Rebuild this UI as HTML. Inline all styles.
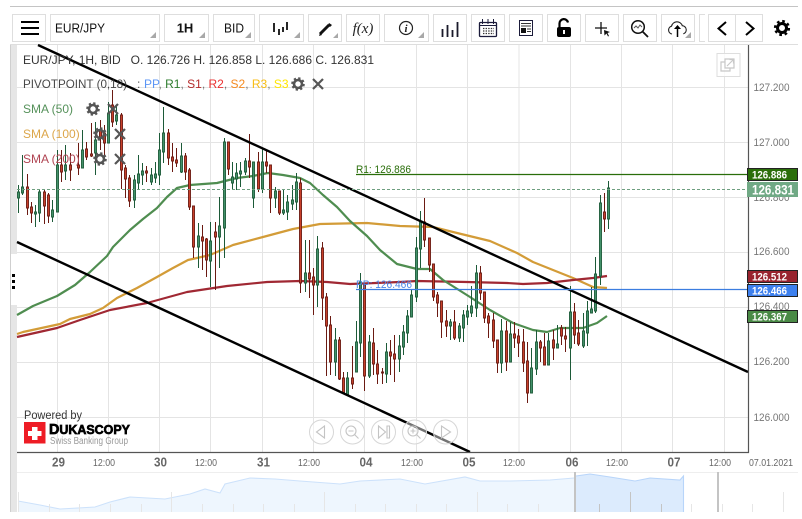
<!DOCTYPE html>
<html><head><meta charset="utf-8"><title>EUR/JPY</title>
<style>
html,body{margin:0;padding:0;background:#fff;width:802px;height:519px;overflow:hidden}
svg{display:block}
text{font-family:"Liberation Sans",sans-serif}
</style></head><body>
<svg width="802" height="519" viewBox="0 0 802 519" xmlns="http://www.w3.org/2000/svg">
<defs>
<g id="gear"><circle r="4" fill="none" stroke="currentColor" stroke-width="2.6"/><circle r="5.6" fill="none" stroke="currentColor" stroke-width="2.4" stroke-dasharray="2.2 2.2"/></g>
</defs>
<!-- toolbar -->
<rect x="10" y="6" width="788" height="1" fill="#c4c4c4"/>
<rect x="10" y="44" width="788" height="1" fill="#dedede"/>
<g fill="#fff" stroke="#dedede">
<rect x="12.5" y="14.5" width="33" height="27"/><rect x="50.5" y="14.5" width="109" height="27"/><rect x="164.5" y="14.5" width="44" height="27"/><rect x="213.5" y="14.5" width="41" height="27"/><rect x="259.5" y="14.5" width="44" height="27"/><rect x="308.5" y="14.5" width="33" height="27"/><rect x="346.5" y="14.5" width="33" height="27"/><rect x="384.5" y="14.5" width="44" height="27"/><rect x="433.5" y="14.5" width="33" height="27"/><rect x="471.5" y="14.5" width="33" height="27"/><rect x="509.5" y="14.5" width="33" height="27"/><rect x="547.5" y="14.5" width="33" height="27"/><rect x="585.5" y="14.5" width="33" height="27"/><rect x="623.5" y="14.5" width="33" height="27"/><rect x="661.5" y="14.5" width="33" height="27"/><rect x="708.5" y="14.5" width="54" height="27"/><path d="M735.5 14.5V41.5M705 14.5H699.5V41.5H705"/>
</g>
<path fill="#a8a8a8" d="M156 32v6h-6zM205 32v6h-6zM251 32v6h-6zM300 32v6h-6zM338 33v5h-5zM424 32v6h-6zM691 32v6h-6z"/>
<path stroke="#000" stroke-width="2" d="M21 22H39M21 28H39M21 34H39"/>
<text x="55" y="32.500" font-size="13" fill="#111" textLength="50" lengthAdjust="spacingAndGlyphs">EUR/JPY</text>
<text x="185" y="32.500" font-size="13" font-weight="bold" text-anchor="middle" fill="#111">1H</text>
<text x="234" y="32.500" font-size="13" text-anchor="middle" fill="#111" textLength="20" lengthAdjust="spacingAndGlyphs">BID</text>
<path stroke="#111" stroke-width="1.8" fill="none" d="M274 23V32M279 29V35M283 27V32M287 22V30"/>
<path stroke="#111" stroke-width="3" d="M320 34L329 25"/><path fill="#111" d="M319 36l1-3 2 2zM329 23l3 2-2 2-2-2z"/>
<text x="363" y="33" font-size="15" text-anchor="middle" font-style="italic" style="font-family:'Liberation Serif',serif" fill="#222">f(x)</text>
<circle cx="406" cy="28" r="6.5" fill="none" stroke="#222" stroke-width="1.2"/><text x="406" y="32" font-size="11" font-weight="bold" font-style="italic" text-anchor="middle" style="font-family:'Liberation Serif',serif" fill="#222">i</text>
<path stroke="#1a1a2a" stroke-width="1.8" d="M442.5 29V37M447.5 25V37M452.5 30V37M457.5 22V37"/>
<rect x="479.5" y="22.5" width="17" height="14" rx="1" fill="none" stroke="#1b1b3a" stroke-width="1.3"/><path stroke="#1b1b3a" stroke-width="1" d="M482.5 19V24M488 19V24M493.5 19V24M480 25.5H496"/><path stroke="#333" stroke-width="1.3" stroke-dasharray="1.4 1.2" d="M483 28.5H494M483 31H494M483 33.5H494"/>
<rect x="519.5" y="20.5" width="13" height="15" fill="none" stroke="#1b1b3a"/><path stroke="#333" d="M521 23.5H531M521 26H531M527 29H531M527 31.5H531"/><rect x="521" y="28" width="5" height="5" fill="#111"/>
<path fill="none" stroke="#000" stroke-width="2.2" d="M559.5 27V23.5a4.3 4.3 0 0 1 8.5-1"/><rect x="557" y="27" width="14" height="10" rx="2" fill="#000"/><rect x="563" y="30" width="2" height="4" fill="#fff"/>
<path stroke="#111" stroke-width="1.3" d="M601 22V34M595 28H607"/><path fill="#111" d="M604 30l6 2-2.5 1 1.5 3-1 .5-1.5-3-2 2z"/>
<circle cx="638" cy="27" r="6.3" fill="none" stroke="#111" stroke-width="1.5"/><path stroke="#111" stroke-width="1.8" d="M642.5 31.5L648 37"/><path fill="none" stroke="#555" d="M634 28l2-2 2 2 2-3 2 2"/>
<path fill="none" stroke="#222" stroke-width="1.1" d="M672 34a4 4 0 0 1-.5-7.8a5.6 5.6 0 0 1 10.8-.5a4.2 4.2 0 0 1 1 8.2"/><path stroke="#000" stroke-width="1.5" d="M677.5 37V28"/><path fill="#000" d="M677.5 25l3.5 4h-7z"/>
<path fill="none" stroke="#000" stroke-width="2" d="M726 22l-7.500 6.500 7.500 6.500M746 22l7.500 6.500-7.500 6.500"/>
<circle cx="782" cy="28" r="4.500" fill="none" stroke="#000" stroke-width="3"/><circle cx="782" cy="28" r="6.800" fill="none" stroke="#000" stroke-width="2.600" stroke-dasharray="2.600 2.740"/>
<!-- left strip -->
<rect x="10" y="45" width="7" height="467" fill="#e6e6e6"/><rect x="10" y="45" width="1" height="467" fill="#cfcfcf"/>
<rect x="11" y="254" width="6" height="51" fill="#fff"/>
<path fill="#000" d="M12 274h3v3h-3zM12 280h3v3h-3zM12 286h3v3h-3z"/>
<!-- grid -->
<path stroke="#e4e4e4" fill="none" d="M57.500 45V452M108.500 45V452M159.500 45V452M210.500 45V452M262.500 45V452M313.500 45V452M364.500 45V452M416.500 45V452M467.500 45V452M519 45V452M570.500 45V452M621.500 45V452M672.500 45V452M724.500 45V452M17 87.500H748M17 142.500H748M17 197.500H748M17 252.500H748M17 307.500H748M17 362.500H748M17 417.500H748"/>
<!-- moving averages -->
<g fill="none" stroke-width="2.200" stroke-linejoin="round">
<polyline stroke="#d39c38" points="17,334 23,332 60,324 70,319 90,314 103,308 117,298 137,288 157,277 173,268 188,260 210,255 233,245 263,237 293,229 320,224 367,223 400,226 433,227 453,232 490,241 517,253 533,262 553,270 573,278 593,287 607,288"/>
<polyline stroke="#a02833" points="17,337 57,328 80,320 110,310 147,303 187,292 227,286 267,282 300,281 327,282 350,284 400,282 417,281 467,282 507,283 523,284 547,283 573,280 593,278 607,276"/>
<polyline stroke="#4f8d50" points="17,315 33,306 57,296 75,285 90,272 107,256 113,247 130,230 143,219 157,208 167,197 177,188 190,185 217,183 237,178 253,176 268,173 283,175 300,178 310,183 323,195 337,207 350,221 367,236 380,250 397,264 417,269 430,269 443,280 470,297 490,310 513,323 533,330 547,332 560,328 583,328 597,323 607,316"/>
</g>
<!-- wicks -->
<path stroke="#1c5a38" fill="none" d="M18.500 185V213M22.500 155V195M35.500 205V227M39.500 190V222M52.500 200V222M57.500 150V212M65.500 145V180M82.500 130V168M95.500 122V175M108.500 102V143M116.500 105V125M134.500 175V208M138.500 155V190M142.500 163V185M151.500 168V185M155.500 162V183M159.500 133V185M163.500 107V163M181.500 143V173M198.500 223V268M210.500 222V287M219.500 197V268M224.500 138V258M232.500 162V189M236.500 163V190M240.500 162V187M245.500 158V175M253.500 162V208M262.500 148V193M275.500 187V208M283.500 190V215M287.500 195V220M292.500 185V210M296.500 173V210M305.500 240V292M317.500 236V307M335.500 328V376M347.500 372V395M356.500 321V372M360.500 273V357M369.500 335V378M386.500 343V383M399.500 335V372M403.500 325V355M407.500 310V343M411.500 290V317M416.500 237V302M420.500 211V268M450.500 319V340M459.500 323V342M463.500 310V342M467.500 305V325M471.500 286V317M476.500 265V317M501.500 319V373M510.500 322V362M531.500 348V393M536.500 330V375M548.500 333V365M557.500 325V348M570.500 286V380M583.500 313V348M587.500 301V346M591.500 287V313M595.500 257V313M600.500 195V285M608.500 181V229"/>
<path stroke="#6b1a12" fill="none" d="M27.500 174V215M31.500 202V223M44.500 190V224M48.500 193V223M61.500 150V182M70.500 153V181M78.500 143V175M86.500 142V160M91.500 123V157M100.500 120V150M104.500 125V160M112.500 90V127M121.500 113V189M125.500 165V198M129.500 175V207M146.500 166V182M168.500 129V165M172.500 143V172M176.500 148V167M185.500 153V180M189.500 168V210M193.500 206V258M202.500 225V270M206.500 238V277M215.500 222V290M228.500 142V175M249.500 134V178M258.500 152V192M266.500 150V173M270.500 165V213M279.500 191V215M300.500 178V293M309.500 240V298M313.500 268V315M322.500 242V320M326.500 293V376M330.500 316V375M339.500 337V380M343.500 372V393M352.500 346V389M364.500 285V391M373.500 328V375M377.500 350V384M382.500 368V384M390.500 340V375M394.500 335V382M424.500 198V247M429.500 238V272M433.500 264V301M437.500 292V317M441.500 301V338M446.500 310V337M454.500 310V340M480.500 266V300M484.500 292V323M488.500 313V338M493.500 313V348M497.500 340V373M506.500 321V371M514.500 322V348M518.500 329V357M523.500 329V372M527.500 342V403M540.500 340V362M544.500 333V365M553.500 330V360M561.500 325V345M565.500 327V352M574.500 303V344M578.500 320V346M604.500 193V232"/>
<!-- bodies -->
<path fill="#43916a" stroke="#1c5a38" stroke-width=".9" d="M17.500 192h2V198h-2zM21.500 187h2V193h-2zM34.500 212h2V214h-2zM38.500 192h2V213h-2zM51.500 210h2V217h-2zM56.500 165h2V212h-2zM64.500 165h2V171h-2zM81.500 150h2V168h-2zM94.500 140h2V153h-2zM107.500 113h2V143h-2zM115.500 115h2V121h-2zM133.500 180h2V200h-2zM137.500 174h2V183h-2zM141.500 171h2V175h-2zM150.500 175h2V182h-2zM154.500 174h2V178h-2zM158.500 150h2V175h-2zM162.500 133h2V152h-2zM180.500 156h2V172h-2zM197.500 236h2V247h-2zM209.500 241h2V261h-2zM218.500 226h2V237h-2zM223.500 142h2V228h-2zM231.500 177h2V183h-2zM235.500 173h2V179h-2zM239.500 171h2V174h-2zM244.500 161h2V172h-2zM252.500 162h2V198h-2zM261.500 162h2V189h-2zM274.500 191h2V198h-2zM282.500 210h2V213h-2zM286.500 202h2V212h-2zM291.500 200h2V204h-2zM295.500 182h2V202h-2zM304.500 273h2V283h-2zM316.500 249h2V285h-2zM334.500 340h2V362h-2zM346.500 378h2V395h-2zM355.500 342h2V372h-2zM359.500 282h2V343h-2zM368.500 342h2V376h-2zM385.500 352h2V374h-2zM398.500 346h2V359h-2zM402.500 332h2V347h-2zM406.500 316h2V333h-2zM410.500 295h2V317h-2zM415.500 248h2V297h-2zM419.500 222h2V249h-2zM449.500 322h2V326h-2zM458.500 326h2V338h-2zM462.500 315h2V328h-2zM466.500 311h2V317h-2zM470.500 306h2V313h-2zM475.500 273h2V308h-2zM500.500 331h2V363h-2zM509.500 334h2V362h-2zM530.500 368h2V393h-2zM535.500 342h2V369h-2zM547.500 341h2V365h-2zM556.500 344h2V348h-2zM569.500 312h2V348h-2zM582.500 331h2V346h-2zM586.500 311h2V333h-2zM590.500 309h2V313h-2zM594.500 274h2V311h-2zM599.500 203h2V276h-2zM607.500 188h2V219h-2z"/>
<path fill="#c8402a" stroke="#6b1a12" stroke-width=".9" d="M26.500 187h2V208h-2zM30.500 207h2V213h-2zM43.500 192h2V206h-2zM47.500 195h2V216h-2zM60.500 165h2V172h-2zM69.500 165h2V170h-2zM77.500 165h2V168h-2zM85.500 149h2V157h-2zM90.500 154h2V156h-2zM99.500 130h2V138h-2zM103.500 133h2V143h-2zM111.500 105h2V122h-2zM120.500 115h2V170h-2zM124.500 168h2V179h-2zM128.500 178h2V201h-2zM145.500 171h2V173h-2zM167.500 133h2V158h-2zM171.500 157h2V161h-2zM175.500 160h2V163h-2zM184.500 156h2V172h-2zM188.500 170h2V207h-2zM192.500 206h2V247h-2zM201.500 237h2V241h-2zM205.500 239h2V260h-2zM214.500 232h2V237h-2zM227.500 142h2V169h-2zM248.500 161h2V167h-2zM257.500 162h2V189h-2zM265.500 162h2V166h-2zM269.500 165h2V198h-2zM278.500 191h2V213h-2zM299.500 183h2V283h-2zM308.500 273h2V279h-2zM312.500 277h2V285h-2zM321.500 248h2V298h-2zM325.500 297h2V326h-2zM329.500 325h2V362h-2zM338.500 340h2V379h-2zM342.500 378h2V393h-2zM351.500 378h2V384h-2zM363.500 285h2V376h-2zM372.500 343h2V364h-2zM376.500 364h2V374h-2zM381.500 372h2V373h-2zM389.500 352h2V356h-2zM393.500 354h2V359h-2zM423.500 222h2V240h-2zM428.500 238h2V265h-2zM432.500 264h2V297h-2zM436.500 295h2V303h-2zM440.500 301h2V322h-2zM445.500 321h2V326h-2zM453.500 322h2V338h-2zM479.500 273h2V293h-2zM483.500 292h2V318h-2zM487.500 316h2V323h-2zM492.500 320h2V341h-2zM496.500 340h2V363h-2zM505.500 331h2V362h-2zM513.500 334h2V338h-2zM517.500 336h2V343h-2zM522.500 342h2V363h-2zM526.500 361h2V393h-2zM539.500 342h2V348h-2zM543.500 347h2V365h-2zM552.500 340h2V348h-2zM560.500 328h2V336h-2zM564.500 336h2V339h-2zM573.500 312h2V335h-2zM577.500 333h2V344h-2zM603.500 212h2V219h-2z"/>
<!-- lines -->
<path stroke="#000" stroke-width="2.400" d="M38 45L748 372M17 242L470 452"/>
<path stroke="#2a6e0a" stroke-width="1.200" d="M356 174.500H748"/>
<path stroke="#3b7de0" stroke-width="1.200" d="M356 289.500H748"/>
<path stroke="#6f9f80" stroke-dasharray="3 2" d="M17 189.500H748"/>
<text x="356" y="173" font-size="11" fill="#2a6e0a" textLength="55" lengthAdjust="spacingAndGlyphs">R1: 126.886</text>
<text x="356" y="288" font-size="11" fill="#4a86e8" textLength="56" lengthAdjust="spacingAndGlyphs">PP: 126.466</text>
<!-- legend -->
<text x="23" y="64" font-size="12" fill="#333" xml:space="preserve" textLength="351">EUR/JPY, 1H, BID   O. 126.726 H. 126.858 L. 126.686 C. 126.831</text>
<text x="23" y="88" font-size="12" fill="#333" fill-opacity=".9" textLength="104" lengthAdjust="spacingAndGlyphs">PIVOTPOINT (0,18)</text>
<text x="137" y="88" font-size="12" fill="#555">:</text>
<text x="144" y="88" font-size="12" fill="#777"><tspan fill="#5b95f5">PP</tspan>, <tspan fill="#2e7d2e">R1</tspan>, <tspan fill="#b42a2a">S1</tspan>, <tspan fill="#ea3030">R2</tspan>, <tspan fill="#f58a1f">S2</tspan>, <tspan fill="#f8bd14">R3</tspan>, <tspan fill="#ffe600">S3</tspan></text>
<text x="23" y="113" font-size="12" fill="#55915a">SMA (50)</text>
<text x="23" y="138" font-size="12" fill="#dca64a">SMA (100)</text>
<text x="23" y="163" font-size="12" fill="#b04452">SMA (200)</text>
<g color="#555">
<use href="#gear" x="298" y="84"/><use href="#gear" x="93" y="109"/><use href="#gear" x="100" y="134"/><use href="#gear" x="100" y="159"/>
</g>
<path stroke="#555" stroke-width="2.200" d="M313 79l10 10M323 79l-10 10M108 104l10 10M118 104l-10 10M115 129l10 10M125 129l-10 10M115 154l10 10M125 154l-10 10"/>
<!-- popout -->
<rect x="717" y="53.500" width="23" height="23" fill="#fff" fill-opacity=".8" stroke="#dedede"/>
<path fill="none" stroke="#c8c8c8" stroke-width="1.200" d="M725 59h9v9h-9zM725 62h-4v9h9v-3M727 66l6-6M729.500 59.500h4v4"/>
<!-- axes -->
<path stroke="#555" stroke-width="1.200" fill="none" d="M748.500 45V452.500H17"/>
<g font-size="11" fill="#777">
<text x="753.500" y="91" textLength="36" lengthAdjust="spacingAndGlyphs">127.200</text><text x="753.500" y="146" textLength="36" lengthAdjust="spacingAndGlyphs">127.000</text><text x="753.500" y="201" textLength="36" lengthAdjust="spacingAndGlyphs">126.800</text><text x="753.500" y="255" textLength="36" lengthAdjust="spacingAndGlyphs">126.600</text><text x="753.500" y="310" textLength="36" lengthAdjust="spacingAndGlyphs">126.400</text><text x="753.500" y="365" textLength="36" lengthAdjust="spacingAndGlyphs">126.200</text><text x="753.500" y="421" textLength="36" lengthAdjust="spacingAndGlyphs">126.000</text>
</g>
<!-- price tags -->
<rect x="747.500" y="168.500" width="50" height="12" fill="#2a6e0a" stroke="#222"/>
<rect x="747" y="182" width="51" height="15" fill="#70a985"/>
<rect x="747.500" y="270.500" width="50" height="12" fill="#98232e" stroke="#222"/>
<rect x="747.500" y="284.500" width="50" height="12" fill="#3d80ee" stroke="#222"/>
<rect x="747.500" y="310.500" width="50" height="12" fill="#4a8a46" stroke="#222"/>
<g fill="#fff" font-weight="bold" font-size="11">
<text x="752" y="178.500" textLength="35" lengthAdjust="spacingAndGlyphs">126.886</text><text x="752" y="280.500" textLength="35" lengthAdjust="spacingAndGlyphs">126.512</text><text x="752" y="294.500" textLength="35" lengthAdjust="spacingAndGlyphs">126.466</text><text x="752" y="320.500" textLength="35" lengthAdjust="spacingAndGlyphs">126.367</text>
<text x="752" y="194.500" font-size="14" textLength="42" lengthAdjust="spacingAndGlyphs">126.831</text>
</g>
<!-- nav buttons -->
<g fill="#fff" fill-opacity=".45" stroke="#d6d6d6"><circle cx="321.500" cy="432" r="12"/><circle cx="352.500" cy="432" r="12"/><circle cx="383.500" cy="432" r="12"/><circle cx="414.500" cy="432" r="12"/><circle cx="445.500" cy="432" r="12"/></g>
<g fill="none" stroke="#c4c4c4" stroke-width="1.100">
<path d="M324.500 426v12l-8-6zM378.500 426v12l7-6zM387 426v12h2.500v-12zM441.500 426v12l9-6z"/>
<circle cx="351" cy="431" r="5"/><path d="M354.500 434.500L358.500 438.500M348.500 431H353.500"/>
<circle cx="413" cy="431" r="5"/><path d="M416.500 434.500L420.500 438.500M410.500 431H415.500M413 428.500V433.500"/>
</g>
<!-- logo -->
<text x="24" y="419" font-size="11.500" fill="#333" textLength="58" lengthAdjust="spacingAndGlyphs">Powered by</text>
<rect x="24" y="422" width="21.500" height="21.500" fill="#ee1c25"/>
<path fill="#fff" d="M32 427h5.500v4h4v5h-4v4H32v-4h-4v-5h4z"/>
<text x="49" y="434" font-size="13" font-weight="bold" fill="#000" stroke="#000" stroke-width=".7" textLength="81" lengthAdjust="spacingAndGlyphs"><tspan font-size="15">D</tspan>UKASCOPY</text>
<text x="50" y="444" font-size="10" fill="#9a9a9a" textLength="78" lengthAdjust="spacingAndGlyphs">Swiss Banking Group</text>
<!-- time axis -->
<g fill="#666" text-anchor="middle">
<g font-size="13" font-weight="bold">
<text x="58.500" y="466.500" textLength="13" lengthAdjust="spacingAndGlyphs">29</text><text x="160.500" y="466.500" textLength="13" lengthAdjust="spacingAndGlyphs">30</text><text x="263.500" y="466.500" textLength="13" lengthAdjust="spacingAndGlyphs">31</text><text x="366" y="466.500" textLength="13" lengthAdjust="spacingAndGlyphs">04</text><text x="469" y="466.500" textLength="13" lengthAdjust="spacingAndGlyphs">05</text><text x="572" y="466.500" textLength="13" lengthAdjust="spacingAndGlyphs">06</text><text x="674" y="466.500" textLength="13" lengthAdjust="spacingAndGlyphs">07</text></g>
<g font-size="10.500">
<text x="104" y="466" textLength="22" lengthAdjust="spacingAndGlyphs">12:00</text><text x="206" y="466" textLength="22" lengthAdjust="spacingAndGlyphs">12:00</text><text x="309" y="466" textLength="22" lengthAdjust="spacingAndGlyphs">12:00</text><text x="412" y="466" textLength="22" lengthAdjust="spacingAndGlyphs">12:00</text><text x="514" y="466" textLength="22" lengthAdjust="spacingAndGlyphs">12:00</text><text x="617" y="466" textLength="22" lengthAdjust="spacingAndGlyphs">12:00</text><text x="720" y="466" textLength="22" lengthAdjust="spacingAndGlyphs">12:00</text><text x="771" y="466" textLength="44" lengthAdjust="spacingAndGlyphs">07.01.2021</text></g>
</g>
<!-- navigator -->
<rect x="17" y="472" width="781" height="1" fill="#eeeeee"/>
<path fill="#eef6fe" d="M18 501L40 505L60 509L95 507L110 502L130 497L165 499L190 494L205 489L220 493L225 484L250 478L275 479L300 481L340 484L360 481L400 479L425 484L465 477L480 481L510 481L550 480L574 478V512H18z"/>
<path fill="#dcebfd" d="M576 476L590 474L610 477L635 481L650 478L680 480L684 476V512H576z"/>
<path fill="none" stroke="#cde2fb" stroke-width="1.100" d="M18 501L40 505L60 509L95 507L110 502L130 497L165 499L190 494L205 489L220 493L225 484L250 478L275 479L300 481L340 484L360 481L400 479L425 484L465 477L480 481L510 481L550 480L574 478"/>
<path fill="none" stroke="#b8d5fa" stroke-width="1.100" d="M576 476L590 474L610 477L635 481L650 478L680 480L683.500 476V512"/>
<path stroke="#e6e6e6" d="M18.500 492V512M171.500 492V512M324.500 492V512M477.500 492V512M783.500 492V512M49.500 504V512M79.500 504V512M110.500 504V512M141.500 504V512M202.500 504V512M233.500 504V512M263.500 504V512M294.500 504V512M355.500 504V512M385.500 504V512M416.500 504V512M446.500 504V512M507.500 504V512M538.500 504V512M691.500 504V512M722.500 504V512M752.500 504V512"/>
<path stroke="#c4c4c4" d="M630.500 492V512M599.500 504V512M661.500 504V512"/>
<rect x="574" y="472" width="2" height="40" fill="#c4c4c4"/><rect x="717" y="472" width="2" height="40" fill="#c4c4c4"/>
</svg>
</body></html>
